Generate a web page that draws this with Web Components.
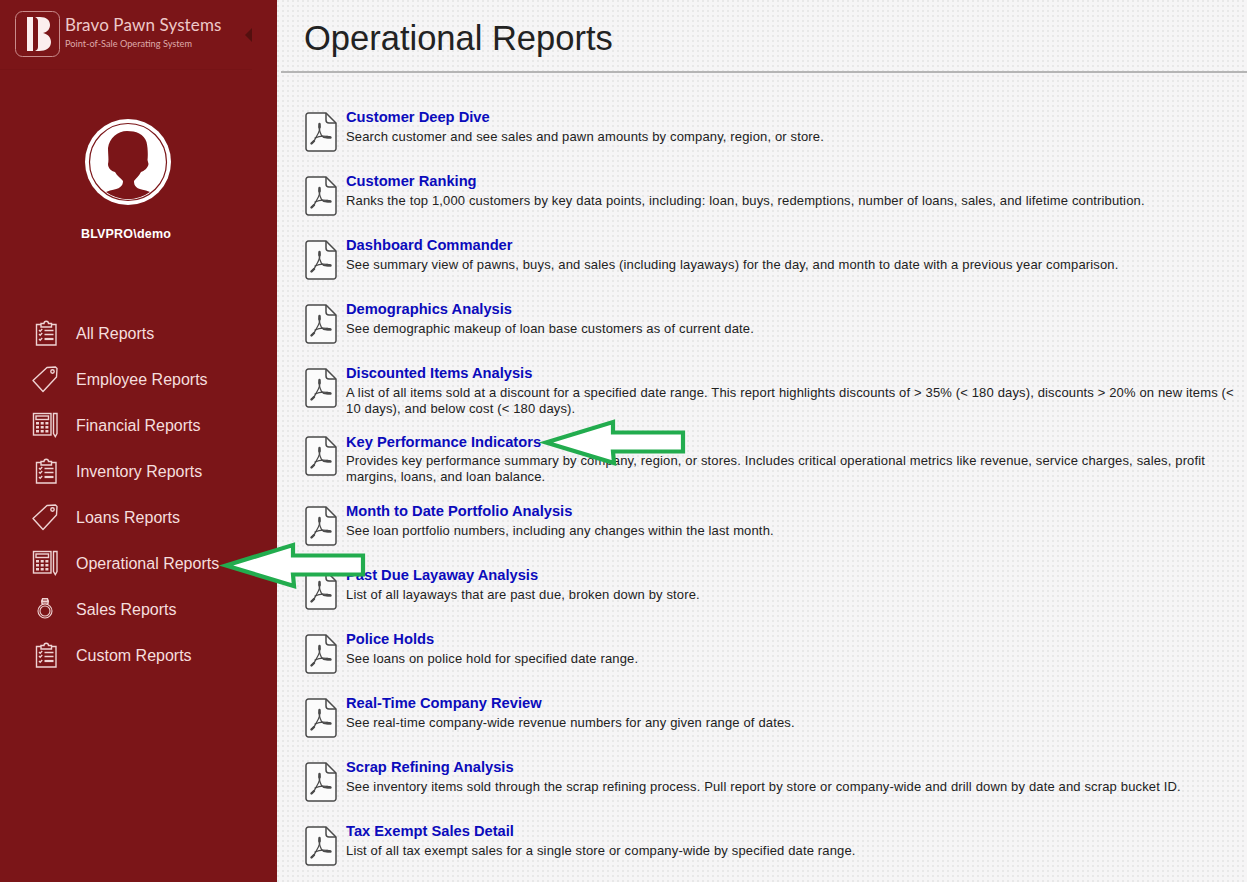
<!DOCTYPE html>
<html lang="en"><head><meta charset="utf-8"><title>Operational Reports</title>
<style>
html,body{margin:0;padding:0;height:882px;overflow:hidden;font-family:"Liberation Sans",Arial,sans-serif}
bp-app{width:1247px;height:882px}
</style></head><body>
<template id="t-app"><style>
:host{display:flex;position:relative;overflow:hidden}
main{flex:1;min-width:0;background-color:#f6f5f6;background-image:radial-gradient(circle at 1px 1px,#e8e8e8 .9px,transparent 1.1px);background-size:5px 5px}
</style><slot name="side"></slot><main><slot></slot></main><slot name="over"></slot></template>

<template id="t-side"><style>
:host{display:flex;flex-direction:column;flex:0 0 277px;background:#7b1518;height:100%}
header{display:flex;align-items:flex-start;height:70px;box-sizing:border-box;padding:11px 0 0 15px;margin-right:25px;border-bottom:1px solid #761316;color:#eec9c9}
.logo{flex:0 0 auto;width:45px;height:46px;display:block}
.bn{margin-left:5px}
.n{font:17px/20px Lato,"Liberation Sans",sans-serif;letter-spacing:.12px;margin-top:4px;white-space:nowrap}
.s{font:9.2px/12px Lato,"Liberation Sans",sans-serif;margin-top:3px;white-space:nowrap;color:#dfa9a9}
.tri{width:0;height:0;border:7px solid transparent;border-right:7px solid #54100f;border-left:0;margin:17px 0 0 auto}
nav{display:flex;flex-direction:column}
</style><header><svg class="logo" viewBox="0 0 45 46" aria-hidden="true"><rect x=".5" y=".5" width="44" height="45" rx="7" fill="none" stroke="#c98b8b"/><path fill="#fbeeee" d="M12 6h6v34h-6zM20 6h5c6.500 0 10 3 10 8 0 4-2.500 7-7 8 4.500 1 8 4 8 9 0 6-5 9-12 9h-4c2-1 3-2 3-4V10c0-2-1-3-3-4z"/></svg>
<div class="bn"><div class="n">Bravo Pawn Systems</div><div class="s">Point-of-Sale Operating System</div></div><div class="tri"></div></header>
<slot name="user"></slot><nav><slot></slot></nav></template>

<template id="t-user"><style>
:host{display:flex;flex-direction:column;align-items:center;height:240px;box-sizing:border-box;padding:48px 21px 0 0;color:#fff}
svg{width:88px;height:88px;display:block}
.u{font:bold 12.5px/16px "Liberation Sans",Arial,sans-serif;margin:20px 4px 0 0;letter-spacing:.2px}
</style><svg viewBox="0 0 88 88" aria-hidden="true"><circle cx="44" cy="44" r="43" fill="#fff"/><circle cx="44" cy="44" r="38.500" fill="none" stroke="#7b1518" stroke-width="1.200"/><path fill="#7b1518" d="M43 13C52 13 60 16 62.500 24 64 30 64 38 63.500 42L64.500 46C64 50 60 53 57 54 55 58 52 60 50 63 50 68 52 71 62 72.500L66 74A37.500 37.500 0 0 1 22 74L26 72.500C36 71 39 68 39 63 37 60 33 58 31 54 27 53 24 50 24 46 25 42 24 36 24 30 25 20 34 13 43 13Z"/></svg><div class="u"><slot></slot></div></template>

<template id="t-nav"><style>
:host{display:flex;align-items:center;height:46px;padding-left:32px;color:#f5dede;font:16px/20px "Liberation Sans",Arial,sans-serif;white-space:nowrap}
.i{flex:0 0 28px;width:28px;height:28px;margin-right:16px;display:block}
.l{padding-top:2px}
svg{display:block;width:28px;height:28px;fill:none;stroke:#efd3d3;stroke-width:1.4}
svg .f{fill:#efd3d3;stroke:none}
</style><span class="i" id="i"></span><span class="l"><slot></slot></span></template>

<template id="t-head"><style>
:host{display:block}
h1{margin:0;padding:18px 0 0 27px;height:53px;font:normal 34.5px/40px "Liberation Sans",Arial,sans-serif;color:#222;box-sizing:content-box}
hr{margin:0 0 0 4px;border:0;height:2px;background:#b5b5b5}
</style><h1><slot></slot></h1><hr></template>

<template id="t-list"><style>
:host{display:flex;flex-direction:column;padding:35px 0 0 28px}
</style><slot></slot></template>

<template id="t-row"><style>
:host{display:flex;align-items:flex-start;gap:9px;min-height:64px;box-sizing:border-box;padding-bottom:15px;padding-right:4px}
:host([wide]){padding-bottom:17px}
:host([wide]) .b{padding-top:1px}
:host([wide]) .d{margin-top:1px}
svg{flex:0 0 32px;width:32px;height:40px;display:block;margin-top:4px}
.b{flex:1;min-width:0}
.t{font:bold 14.7px/20px "Liberation Sans",Arial,sans-serif;color:#0b0bbc;margin-top:-1px}
.d{font:13px/16px "Liberation Sans",Arial,sans-serif;color:#222;letter-spacing:.15px;margin-top:2px}
</style><svg viewBox="0 0 32 40" aria-hidden="true"><path d="M3.500 1H21l10 10v25.500a2.500 2.500 0 0 1-2.500 2.500h-25A2.500 2.500 0 0 1 1 36.500v-33A2.500 2.500 0 0 1 3.500 1z" fill="#fbfbfb" stroke="#4a4a4a" stroke-width="1.500"/><path d="M21 1v7a3 3 0 0 0 3 3h7" fill="none" stroke="#4a4a4a" stroke-width="1.500"/><g fill="none" stroke="#4a4a4a" stroke-width="1.300" stroke-linecap="round"><path d="M14.500 12.500c-1 3 0 7 2 11 1.500 2 4 3 8 2"/><path d="M14.500 12.500c1 3-.5 8-3 12-1.500 3-3 6-5 6.500"/><path d="M10 26c4-2 9-2.500 15-1"/><path stroke-width="2.400" d="M14.500 12v3M6.500 31.500 9 29M22 25l3.500.5"/></g></svg><div class="b"><div class="t"><slot name="title"></slot></div><div class="d"><slot></slot></div></div></template>

<template id="t-arrow"><style>
:host{position:absolute;display:block;width:144px;height:44px}
svg{display:block;width:144px;height:44px;overflow:visible}
</style><svg viewBox="0 0 144 44" aria-hidden="true"><path d="M5 21.500 72 1v10.500h70v19H72L73 42z" fill="#fff" stroke="#22ac4e" stroke-width="4.200" stroke-linejoin="miter"/></svg></template>

<bp-app>
<bp-side slot="side">
<bp-user slot="user">BLVPRO\demo</bp-user>
<bp-nav icon="clip">All Reports</bp-nav>
<bp-nav icon="tag">Employee Reports</bp-nav>
<bp-nav icon="calc">Financial Reports</bp-nav>
<bp-nav icon="clip">Inventory Reports</bp-nav>
<bp-nav icon="tag">Loans Reports</bp-nav>
<bp-nav icon="calc">Operational Reports</bp-nav>
<bp-nav icon="ring">Sales Reports</bp-nav>
<bp-nav icon="clip">Custom Reports</bp-nav>
</bp-side>
<bp-head>Operational Reports</bp-head>
<bp-list>
<bp-row><span slot="title">Customer Deep Dive</span>Search customer and see sales and pawn amounts by company, region, or store.</bp-row>
<bp-row><span slot="title">Customer Ranking</span>Ranks the top 1,000 customers by key data points, including: loan, buys, redemptions, number of loans, sales, and lifetime contribution.</bp-row>
<bp-row><span slot="title">Dashboard Commander</span>See summary view of pawns, buys, and sales (including layaways) for the day, and month to date with a previous year comparison.</bp-row>
<bp-row><span slot="title">Demographics Analysis</span>See demographic makeup of loan base customers as of current date.</bp-row>
<bp-row><span slot="title">Discounted Items Analysis</span>A list of all items sold at a discount for a specified date range. This report highlights discounts of &gt; 35% (&lt; 180 days), discounts &gt; 20% on new items (&lt; 10 days), and below cost (&lt; 180 days).</bp-row>
<bp-row wide><span slot="title">Key Performance Indicators</span>Provides key performance summary by company, region, or stores. Includes critical operational metrics like revenue, service charges, sales, profit margins, loans, and loan balance.</bp-row>
<bp-row><span slot="title">Month to Date Portfolio Analysis</span>See loan portfolio numbers, including any changes within the last month.</bp-row>
<bp-row><span slot="title">Past Due Layaway Analysis</span>List of all layaways that are past due, broken down by store.</bp-row>
<bp-row><span slot="title">Police Holds</span>See loans on police hold for specified date range.</bp-row>
<bp-row><span slot="title">Real-Time Company Review</span>See real-time company-wide revenue numbers for any given range of dates.</bp-row>
<bp-row><span slot="title">Scrap Refining Analysis</span>See inventory items sold through the scrap refining process. Pull report by store or company-wide and drill down by date and scrap bucket ID.</bp-row>
<bp-row><span slot="title">Tax Exempt Sales Detail</span>List of all tax exempt sales for a single store or company-wide by specified date range.</bp-row>
</bp-list>
<bp-arrow slot="over" style="left:221px;top:544px"></bp-arrow>
<bp-arrow slot="over" style="left:541px;top:421px"></bp-arrow>
</bp-app>
<script>
const ICONS={
clip:'<path d="M9 5.500H4.500v20.500h19.500V5.500H19.500"/><path d="M9 8V4.500h3c0-3 4.500-3 4.500 0h3V8z"/><path d="M12.500 11.500h9M12.500 15.500h9"/><path stroke-width="2.200" d="M12.500 20h9"/><path d="M7 11l1.200 1.200L10.200 10M7 15l1.200 1.200 2-2.200M7 20l1.200 1.200 2-2.200"/>',
tag:'<path d="M1 15.500 15 2.500l8.500-.5 1.500 1.500-.5 8.500L11 26.500z" stroke-linejoin="round"/><circle cx="20.500" cy="6.500" r="1.700"/>',
calc:'<rect x="1.500" y="2.500" width="17.500" height="21.500"/><rect x="4" y="5" width="12.500" height="3.500"/><path class="f" d="M4 11h3v2.500H4zM8.700 11h3v2.500h-3zM13.400 11h3v2.500h-3zM4 15h3v2.500H4zM8.700 15h3v2.500h-3zM13.400 15h3v2.500h-3zM4 19h3v2.500H4zM8.700 19h3v2.500h-3zM13.400 19h3v2.500h-3z"/><path d="M21.500 2.500h3.500v20l-1.700 3-1.800-3z"/>',
ring:'<circle cx="13" cy="16" r="7" stroke-width="1.100"/><circle cx="13" cy="16" r="5" stroke-width="1.100"/><path stroke-width="1.100" d="M10 9.500 9.500 6l1-2.500h5l1 2.500-.5 3.500M11 3.500v6M13 3.500v5.500M15 3.500v6M9.500 6.500h7"/>'
};
function def(name,tid,init){customElements.define(name,class extends HTMLElement{
 constructor(){super();this.attachShadow({mode:'open'}).appendChild(document.getElementById(tid).content.cloneNode(true));}
 connectedCallback(){if(init)init(this);}
});}
def('bp-app','t-app');def('bp-side','t-side');def('bp-user','t-user');
def('bp-nav','t-nav',el=>{el.shadowRoot.getElementById('i').innerHTML='<svg viewBox="0 0 28 28" aria-hidden="true">'+(ICONS[el.getAttribute('icon')]||'')+'</svg>';});
def('bp-head','t-head');def('bp-list','t-list');def('bp-row','t-row');def('bp-arrow','t-arrow');
</script>
</body></html>
